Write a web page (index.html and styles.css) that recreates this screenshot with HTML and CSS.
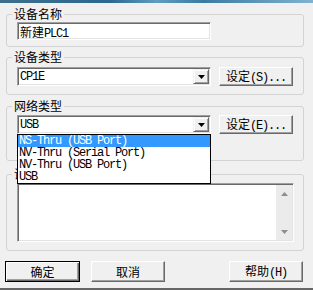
FILE: index.html
```html
<!DOCTYPE html>
<html lang="zh-CN">
<head>
  <meta charset="UTF-8" />
  <title>新建PLC</title>
  <link rel="stylesheet" href="styles.css">
</head>
<body>

  <div class="titlebar"></div>

  <div class="dialog">

    <div class="group g-name">
      <div class="group-title">设备名称</div>
      <div class="field sunken">新建<span class="en">PLC1</span></div>
    </div>

    <div class="group g-type">
      <div class="group-title">设备类型</div>
      <div class="row">
        <div class="combo-wrap">
          <div class="combo sunken">
            <span class="combo-text en">CP1E</span>
            <span class="combo-btn">
              <svg width="7" height="4" viewBox="0 0 7 4"><polygon points="0,0 7,0 3.5,4" fill="#000"/></svg>
            </span>
          </div>
        </div>
        <button class="btn">设定<span class="en">(S)...</span></button>
      </div>
    </div>

    <div class="group g-net">
      <div class="group-title">网络类型</div>
      <div class="row">
        <div class="combo-wrap">
          <div class="combo sunken">
            <span class="combo-text en">USB</span>
            <span class="combo-btn">
              <svg width="7" height="4" viewBox="0 0 7 4"><polygon points="0,0 7,0 3.5,4" fill="#000"/></svg>
            </span>
          </div>
          <ul class="dropdown">
            <li class="en selected">NS-Thru (USB Port)</li>
            <li class="en">NV-Thru (Serial Port)</li>
            <li class="en">NV-Thru (USB Port)</li>
            <li class="en">USB</li>
          </ul>
        </div>
        <button class="btn">设定<span class="en">(E)...</span></button>
      </div>
    </div>

    <div class="group g-memo">
      <div class="group-title">说明</div>
      <div class="memo sunken">
        <div class="memo-body"></div>
        <div class="scrollbar">
          <span class="scroll-arrow">
            <svg width="7" height="4" viewBox="0 0 7 4"><polygon points="0,4 7,4 3.5,0" fill="#8e8e8e"/></svg>
          </span>
          <span class="scroll-arrow">
            <svg width="7" height="4" viewBox="0 0 7 4"><polygon points="0,0 7,0 3.5,4" fill="#8e8e8e"/></svg>
          </span>
        </div>
      </div>
    </div>

    <div class="actions">
      <button class="btn btn-lg btn-default">确定</button>
      <button class="btn btn-lg btn-cancel">取消</button>
      <button class="btn btn-lg btn-help">帮助<span class="en">(H)</span></button>
    </div>

  </div>

  <div class="bottom-edge"></div>

</body>
</html>
```

FILE: styles.css
```css
* {
  box-sizing: border-box;
}
html, body {
  margin: 0;
}
body {
  width: 313px;
  height: 290px;
  overflow: hidden;
  background: #f0f0f0;
  color: #000;
  font-family: "Noto Sans CJK SC", "Noto Sans", sans-serif;
  font-size: 12px;
  line-height: 13px;
}
.en {
  font-family: "Liberation Mono", monospace;
  letter-spacing: -1.2px;
}
.titlebar {
  height: 3px;
  background: linear-gradient(90deg, #3d6f8c 0%, #2c6890 35%, #5f9dc0 50%, #3b7aa3 65%, #7fb3d0 100%);
}
.dialog {
  padding: 0 9px 0 6px;
}
.group {
  border: 1px solid #d3d3d3;
  border-radius: 3px;
  padding: 0 10px;
}
.group-title {
  width: fit-content;
  margin: -8px 0 0 -5px;
  padding: 0 2px;
  background: #f0f0f0;
}
.sunken {
  background: #fff;
  border: 1px solid;
  border-color: #a0a0a0 #fff #fff #a0a0a0;
  box-shadow: inset 1px 1px #696969, inset -1px -1px #e3e3e3;
}

.g-name {
  margin-top: 11px;
  padding-bottom: 6px;
}
.field {
  width: 194px;
  height: 18px;
  margin-top: 2px;
  padding: 2px 0 0 2px;
}

.g-type {
  margin-top: 10px;
  padding-bottom: 8px;
}
.g-type .row {
  margin-top: 4px;
}
.g-net {
  margin-top: 11px;
  padding-bottom: 26px;
}
.g-net .row {
  margin-top: 3px;
}
.row {
  display: flex;
  align-items: flex-start;
}
.combo-wrap {
  position: relative;
  width: 197px;
}
.combo {
  display: flex;
  height: 19px;
  padding: 1px;
}
.combo-text {
  flex: 1;
  padding: 2px 0 0 1px;
}
.combo-btn {
  width: 16px;
  display: flex;
  align-items: center;
  justify-content: center;
  background: #f0f0f0;
  border: 1px solid;
  border-color: #f0f0f0 #696969 #696969 #f0f0f0;
  box-shadow: inset 1px 1px #fff, inset -1px -1px #a0a0a0;
}

.dropdown {
  position: absolute;
  top: 100%;
  left: 0;
  width: 100%;
  z-index: 5;
  margin: 0;
  padding: 0;
  list-style: none;
  background: #fff;
  border: 1px solid #000;
}
.dropdown li {
  height: 12px;
  line-height: 12px;
  padding-left: 1px;
  white-space: nowrap;
}
.dropdown li.selected {
  background: #3399ff;
  color: #fff;
}

.btn {
  width: 75px;
  height: 19px;
  margin-left: 8px;
  padding: 0;
  font: inherit;
  color: #000;
  background: #f0f0f0;
  border: 1px solid;
  border-color: #fff #696969 #696969 #fff;
  box-shadow: inset -1px -1px #a0a0a0;
}

.g-memo {
  margin-top: 13px;
  padding-bottom: 8px;
}
.memo {
  display: flex;
  width: 277px;
  height: 59px;
  margin-top: 3px;
  padding: 1px;
}
.memo-body {
  flex: 1;
}
.scrollbar {
  width: 16px;
  display: flex;
  flex-direction: column;
  justify-content: space-between;
  background: #ebebeb;
}
.scroll-arrow {
  height: 17px;
  display: flex;
  align-items: center;
  justify-content: center;
}

.actions {
  display: flex;
  margin-top: 10px;
}
.btn-lg {
  height: 21px;
  width: 74px;
}
.btn-default {
  width: 75px;
  margin-left: -1px;
  border-color: #000;
  box-shadow: inset 1px 1px #fff, inset -1px -1px #696969, inset -2px -2px #a0a0a0;
}
.btn-cancel {
  margin-left: 11px;
}
.btn-help {
  margin-left: auto;
  margin-right: 1px;
}
.bottom-edge {
  margin-top: 6px;
  height: 2px;
  background: #666;
}
```
